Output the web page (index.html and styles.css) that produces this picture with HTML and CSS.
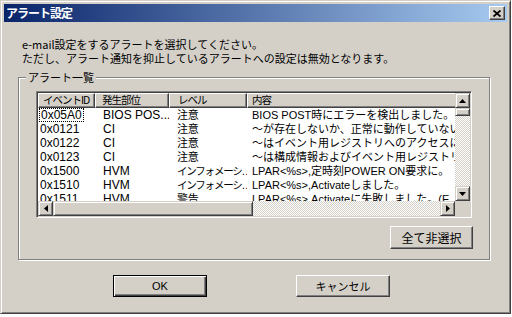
FILE: index.html
```html
<!DOCTYPE html>
<html lang="ja">
<head>
<meta charset="utf-8">
<title>アラート設定</title>
<link rel="stylesheet" href="styles.css">
</head>
<body>
<div class="window">
  <div class="titlebar">
    <span class="title">アラート設定</span>
    <button class="close" aria-label="閉じる">
      <svg width="8" height="7" viewBox="0 0 8 7"><path d="M0.5 0.5 L7.5 6.5 M7.5 0.5 L0.5 6.5" stroke="#000" stroke-width="1.8" fill="none"/></svg>
    </button>
  </div>
  <div class="body">
    <div class="message">
      <div>e-mail設定をするアラートを選択してください。</div>
      <div>ただし、アラート通知を抑止しているアラートへの設定は無効となります。</div>
    </div>
    <div class="group">
      <span class="legend">アラート一覧</span>
      <div class="list">
        <div class="list-main">
          <div class="header">
            <div class="hcell c1">イベントID</div>
            <div class="hcell c2">発生部位</div>
            <div class="hcell c3">レベル</div>
            <div class="hcell c4">内容</div>
          </div>
          <div class="row">
            <div class="cell c1"><span class="focus">0x05A0</span></div>
            <div class="cell c2">BIOS POS...</div>
            <div class="cell c3 jp">注意</div>
            <div class="cell c4">BIOS POST時にエラーを検出しました。</div>
          </div>
          <div class="row">
            <div class="cell c1">0x0121</div>
            <div class="cell c2">CI</div>
            <div class="cell c3 jp">注意</div>
            <div class="cell c4">～が存在しないか、正常に動作していない</div>
          </div>
          <div class="row">
            <div class="cell c1">0x0122</div>
            <div class="cell c2">CI</div>
            <div class="cell c3 jp">注意</div>
            <div class="cell c4">～はイベント用レジストリへのアクセスに失敗</div>
          </div>
          <div class="row">
            <div class="cell c1">0x0123</div>
            <div class="cell c2">CI</div>
            <div class="cell c3 jp">注意</div>
            <div class="cell c4">～は構成情報およびイベント用レジストリ/</div>
          </div>
          <div class="row">
            <div class="cell c1">0x1500</div>
            <div class="cell c2">HVM</div>
            <div class="cell c3 jp narrow">インフォメーシ…</div>
            <div class="cell c4">LPAR&lt;%s&gt;,定時刻POWER ON要求に。</div>
          </div>
          <div class="row">
            <div class="cell c1">0x1510</div>
            <div class="cell c2">HVM</div>
            <div class="cell c3 jp narrow">インフォメーシ…</div>
            <div class="cell c4">LPAR&lt;%s&gt;,Activateしました。</div>
          </div>
          <div class="row">
            <div class="cell c1">0x1511</div>
            <div class="cell c2">HVM</div>
            <div class="cell c3 jp">警告</div>
            <div class="cell c4">LPAR&lt;%s&gt;,Activateに失敗しました。(E</div>
          </div>
        </div>
        <div class="vscroll">
          <div class="sbtn"><svg width="7" height="4" viewBox="0 0 7 4"><path d="M3.5 0 L7 4 L0 4 Z" fill="#000"/></svg></div>
          <div class="thumb vthumb"></div>
          <div class="track"></div>
          <div class="sbtn"><svg width="7" height="4" viewBox="0 0 7 4"><path d="M0 0 L7 0 L3.5 4 Z" fill="#000"/></svg></div>
        </div>
        <div class="hscroll">
          <div class="sbtn"><svg width="4" height="7" viewBox="0 0 4 7"><path d="M4 0 L4 7 L0 3.5 Z" fill="#000"/></svg></div>
          <div class="thumb hthumb"></div>
          <div class="track"></div>
          <div class="sbtn"><svg width="4" height="7" viewBox="0 0 4 7"><path d="M0 0 L4 3.5 L0 7 Z" fill="#000"/></svg></div>
        </div>
        <div class="corner"></div>
      </div>
      <div class="group-actions">
        <button class="btn btn-wide">全て非選択</button>
      </div>
    </div>
    <div class="dialog-actions">
      <button class="btn btn-default">OK</button>
      <button class="btn">キャンセル</button>
    </div>
  </div>
</div>
</body>
</html>
```

FILE: styles.css
```css
html, body {
  margin: 0;
  padding: 0;
  background: #ffffff;
}

body {
  font-family: "Liberation Sans", "Noto Sans CJK JP", sans-serif;
  font-size: 12px;
  color: #000;
}

.window {
  width: 511px;
  height: 314px;
  box-sizing: border-box;
  background: #d4d0c8;
  border: 1px solid;
  border-color: #d4d0c8 #404040 #404040 #d4d0c8;
  box-shadow: inset 1px 1px #ffffff, inset -1px -1px #808080;
  padding: 3px;
  display: flex;
  flex-direction: column;
}

.titlebar {
  height: 18px;
  flex: none;
  background: linear-gradient(to right, #0a246a, #a6caf0);
  display: flex;
  align-items: center;
  justify-content: space-between;
  padding: 0 2px 0 2px;
}

.title {
  color: #fff;
  font-family: "Noto Sans CJK JP", sans-serif;
  font-weight: bold;
  font-size: 12px;
  line-height: 18px;
  letter-spacing: -1px;
}

.close {
  width: 16px;
  height: 14px;
  margin: 0;
  padding: 0;
  box-sizing: border-box;
  background: #d4d0c8;
  border: 1px solid;
  border-color: #ffffff #404040 #404040 #ffffff;
  box-shadow: inset -1px -1px #808080;
  display: flex;
  align-items: center;
  justify-content: center;
}

.body {
  flex: 1;
  display: flex;
  flex-direction: column;
}

.message {
  margin: 15px 0 0 18px;
  font-family: "Noto Sans CJK JP", sans-serif;
  font-size: 11px;
  line-height: 14px;
}

.group {
  position: relative;
  margin: 12px 0 0 14px;
  width: 472px;
  box-sizing: border-box;
  border: 1px solid #808080;
  box-shadow: inset 1px 1px #ffffff, 1px 1px #ffffff;
  padding: 13px 16px 10px 17px;
  display: flex;
  flex-direction: column;
}

.legend {
  position: absolute;
  left: 7px;
  top: -8px;
  padding: 0 2px;
  background: #d4d0c8;
  font-family: "Noto Sans CJK JP", sans-serif;
  font-size: 11px;
  line-height: 14px;
}

.list {
  width: 436px;
  height: 127px;
  box-sizing: border-box;
  border: 1px solid;
  border-color: #808080 #ffffff #ffffff #808080;
  box-shadow: inset 1px 1px #404040, inset -1px -1px #d4d0c8;
  padding: 1px;
  display: grid;
  grid-template-columns: 1fr 15px;
  grid-template-rows: 1fr 15px;
  background: #fff;
}

.list-main {
  overflow: hidden;
  background: #fff;
}

.header {
  display: flex;
  height: 15px;
}

.hcell {
  flex: none;
  box-sizing: border-box;
  height: 15px;
  background: #d4d0c8;
  border: 1px solid;
  border-color: #ffffff #404040 #404040 #ffffff;
  box-shadow: inset -1px -1px #808080;
  font-family: "Noto Sans CJK JP", sans-serif;
  font-size: 10.5px;
  line-height: 12px;
  letter-spacing: -1px;
  padding-left: 4px;
  white-space: nowrap;
  overflow: hidden;
}

.c1 { width: 57px; }
.c2 { width: 74px; }
.c3 { width: 78px; }
.c4 { width: 320px; }

.header .c2 { padding-left: 6px; }
.header .c3 { padding-left: 8px; }
.header .c4 { padding-left: 4px; }

.row {
  display: flex;
  height: 14px;
  line-height: 14px;
  white-space: nowrap;
}

.cell {
  flex: none;
  box-sizing: border-box;
  overflow: hidden;
  padding-left: 8px;
}

.cell.c1 { padding-left: 2px; }
.cell.c4 { padding-left: 5px; font-size: 11px; }
.cell.jp { font-size: 11px; letter-spacing: -0.3px; }
.cell.jp.narrow { font-size: 10.5px; letter-spacing: -1.2px; }

.focus {
  display: inline-block;
  line-height: 12px;
  padding: 0 1px;
  outline: 1px dotted #000;
  outline-offset: 0;
}

.vscroll {
  display: flex;
  flex-direction: column;
}

.hscroll {
  display: flex;
}

.sbtn {
  flex: none;
  width: 15px;
  height: 15px;
  box-sizing: border-box;
  background: #d4d0c8;
  border: 1px solid;
  border-color: #d4d0c8 #404040 #404040 #d4d0c8;
  box-shadow: inset 1px 1px #ffffff, inset -1px -1px #808080;
  display: flex;
  align-items: center;
  justify-content: center;
}

.thumb {
  flex: none;
  box-sizing: border-box;
  background: #d4d0c8;
  border: 1px solid;
  border-color: #d4d0c8 #404040 #404040 #d4d0c8;
  box-shadow: inset 1px 1px #ffffff, inset -1px -1px #808080;
}

.vthumb { width: 15px; height: 8px; }
.hthumb { width: 200px; height: 15px; }

.track {
  flex: 1;
  background: repeating-conic-gradient(#ffffff 0 25%, #d4d0c8 0 50%) 0 0 / 2px 2px;
}

.corner {
  background: #d4d0c8;
}

.group-actions {
  display: flex;
  justify-content: flex-end;
  margin-top: 8px;
}

.btn {
  margin: 0;
  padding: 0;
  box-sizing: border-box;
  width: 94px;
  height: 22px;
  background: #d4d0c8;
  border: 1px solid;
  border-color: #ffffff #404040 #404040 #ffffff;
  box-shadow: inset -1px -1px #808080;
  font-family: "Liberation Sans", "Noto Sans CJK JP", sans-serif;
  font-size: 11px;
  color: #000;
}

.btn-wide {
  width: 83px;
  height: 23px;
  font-size: 12px;
}

.btn-default {
  border: 1px solid #000;
  box-shadow: inset 1px 1px #ffffff, inset -1px -1px #404040, inset -2px -2px #808080;
}

.dialog-actions {
  display: flex;
  gap: 89px;
  margin-top: 15px;
  padding-left: 109px;
}
```
